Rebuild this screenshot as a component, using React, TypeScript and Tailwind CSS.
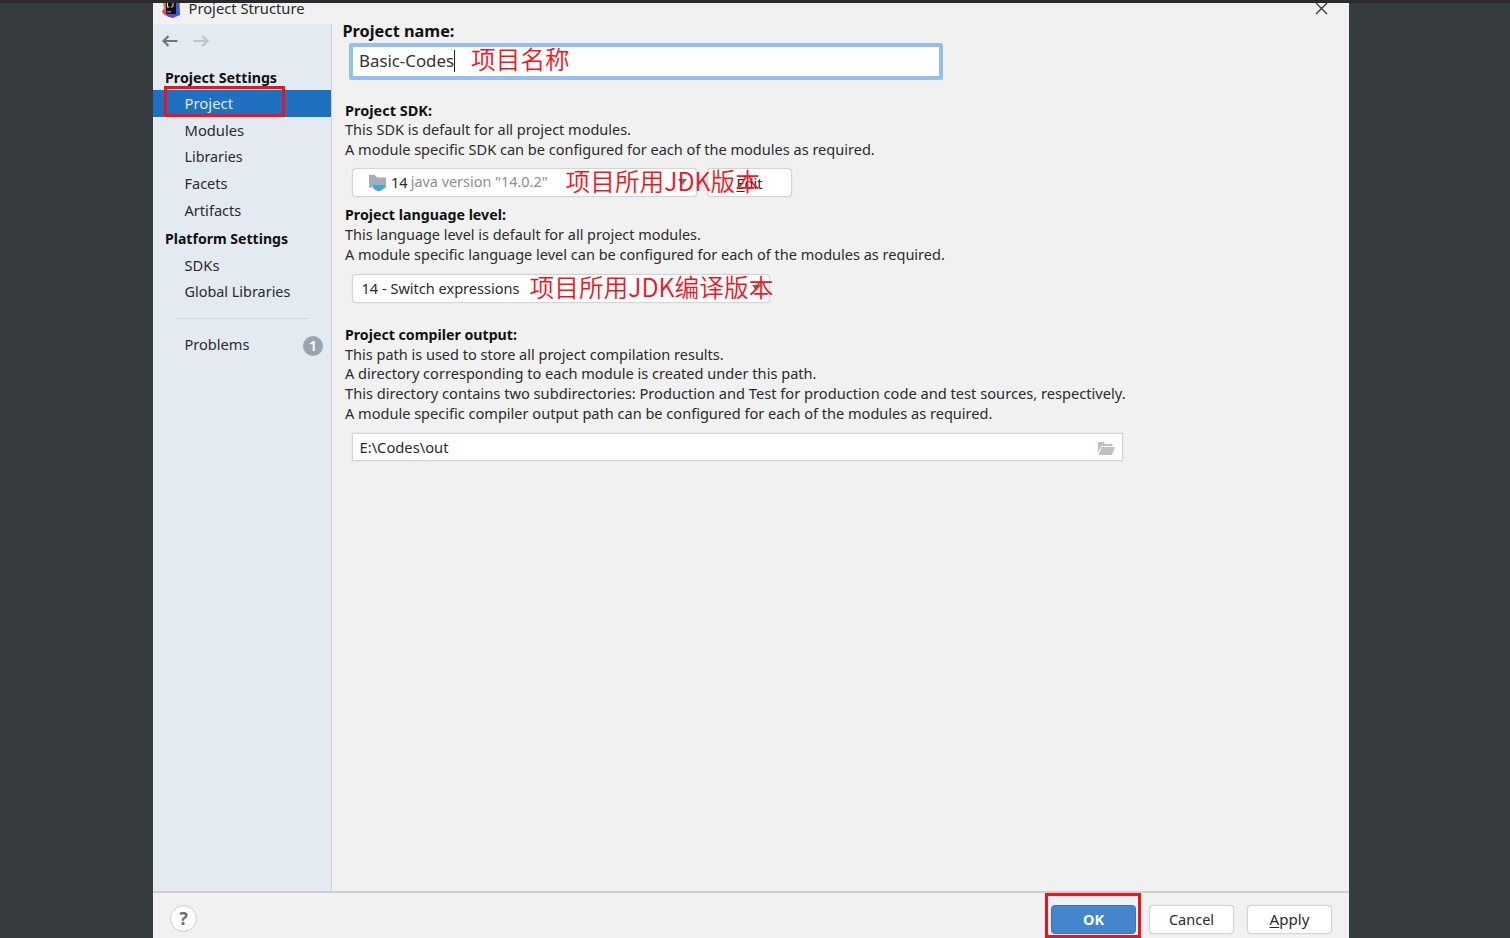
import React from "react";

function Logo() {
  return (
    <svg className="h-[15px] w-[18px] shrink-0" viewBox="0 0 18 15">
      <path d="M1 0H10L8 13L3 12L0 9L2 5Z" fill="#f0643c" />
      <path d="M0 8L4 7L8 14L3 12Z" fill="#e0407a" />
      <path d="M10 0H17.5L18 12L11 15L5 13L4 9Z" fill="#3b5bdc" />
      <path d="M5 10L14 11L11 15L5 13Z" fill="#7b3fc4" />
      <rect x="4" y="0" width="10" height="11" fill="#120c14" />
      <path d="M5.5 0V4M5 4H7.5M11 0V3Q11 4.2 9 4.2" stroke="#e8e8e8" strokeWidth="1" fill="none" />
      <rect x="5.2" y="8.3" width="4" height="1" fill="#b8b8b8" />
    </svg>
  );
}

function Arrow({ className, flip }: { className: string; flip?: boolean }) {
  return (
    <svg className={className} viewBox="0 0 16 12" fill="none" stroke="currentColor" strokeWidth="2.2">
      {flip ? <path d="M0.5 6H14.5M9.5 1L14.5 6L9.5 11" /> : <path d="M15.5 6H1.5M6.5 1L1.5 6L6.5 11" />}
    </svg>
  );
}

function Caret() {
  return (
    <svg className="h-[6px] w-[9px]" viewBox="0 0 9 6">
      <path d="M0 0H9L4.5 6Z" fill="#6e6e6e" />
    </svg>
  );
}

function Item({ children, size }: { children: React.ReactNode; size: string }) {
  return <div className={`flex h-[27px] items-center pb-px pl-[31.5px] ${size}`}>{children}</div>;
}

const note = "absolute whitespace-nowrap font-['Noto_Sans_CJK_SC',sans-serif] font-[350] text-[24.7px] leading-[30px] text-[#f5141e]";
const field = "flex items-center border-[1.5px] shadow-[0_0_1px_#c8c8c8] border-[#d4d4d4] bg-white";

function Sidebar() {
  return (
    <nav className="w-[179px] shrink-0 border-r border-[#d0d4d8] bg-[#e3eaf1] text-[#2b2b2b]">
      <div className="flex h-[42px] items-center gap-[15px] pl-[9px] pb-[8px]">
        <Arrow className="h-[12px] w-[16px] text-[#737679]" />
        <Arrow flip className="h-[12px] w-[16px] text-[#bfc2c5]" />
      </div>
      <div className="flex h-[24px] items-center pl-[12px] text-[14.22px] font-bold text-[#111]">Project Settings</div>
      <div className="relative bg-[#1f70c1] text-[#dfeaf6]">
        <Item size="text-[14.9px]">Project</Item>
        <div className="absolute -top-[4px] left-[11px] h-[31px] w-[121px] border-[3px] border-[#ee141e]" />
      </div>
      <Item size="text-[14.75px]">Modules</Item>
      <Item size="text-[14.3px]">Libraries</Item>
      <Item size="text-[14.5px]">Facets</Item>
      <Item size="text-[14.6px]">Artifacts</Item>
      <div className="flex h-[27px] items-center pl-[12px] text-[14.07px] font-bold text-[#111]">Platform Settings</div>
      <Item size="text-[14.7px]">SDKs</Item>
      <Item size="text-[14.42px]">Global Libraries</Item>
      <div className="mx-[22px] mt-[12px] h-px bg-[#d3dae0]" />
      <div className="mt-[13px] flex items-center justify-between pr-[8px]">
        <Item size="text-[14.59px]">Problems</Item>
        <span className="flex size-[20px] items-center justify-center rounded-full bg-[#9aa3b0] text-[15px] font-semibold text-white">1</span>
      </div>
    </nav>
  );
}

function Content() {
  return (
    <main className="flex-1 pl-[13px] text-[14.55px] leading-[20px] text-[#2b2b2b]">
      <div className="-ml-[2.5px] mt-[-3px] h-[20px] text-[16.28px] font-bold text-[#111]">Project name:</div>
      <div className="relative ml-[4px] mt-[2px] flex h-[37px] w-[594px] items-center rounded-[2px] border-[4px] border-[#97bfec] bg-white pl-[6px] pb-[2px] text-[16.83px] text-[#333]">
        Basic-Codes
        <span className="h-[22px] w-px bg-[#222]" />
        <span className={`${note} left-[118px] top-[-4px]`}>项目名称</span>
      </div>

      <div className="mt-[21px] text-[14.49px] font-bold text-[#111]">Project SDK:</div>
      <div className="-mt-px text-[14.49px]">This SDK is default for all project modules.</div>
      <div className="-mt-px">A module specific SDK can be configured for each of the modules as required.</div>
      <div className="relative ml-[7px] mt-[9px] flex h-[29px] gap-[10px]">
        <div className={`${field} w-[345px] rounded-[4px] pb-px pl-[15px] pr-[9px]`}>
          <svg className="mr-[4px] h-[17px] w-[19px]" viewBox="0 0 19 17">
            <path d="M1 1H7L9 3.5H18V13.5H1Z" fill="#a5adb5" />
            <path d="M5 11H16V13Q14.5 17 10.5 17Q6.5 17 5 13Z" fill="#3fa9dc" />
            <path d="M15.5 11.7Q18.5 11.7 17 13.5L14.5 14.5" stroke="#3fa9dc" fill="none" />
          </svg>
          <span className="mr-[3px]">14</span>
          <span className="flex-1 whitespace-nowrap text-[14.43px] text-[#8e8e8e]">java version "14.0.2"</span>
          <Caret />
        </div>
        <div className={`${field} w-[85px] justify-center rounded-[4px]`}>
          <span><u className="decoration-1 underline-offset-2">E</u>dit</span>
        </div>
        <span className={`${note} left-[213.5px] top-[-3px]`}>项目所用<span className="text-[25px]">JDK</span>版本</span>
      </div>

      <div className="mt-[8px] text-[14.23px] font-bold text-[#111]">Project language level:</div>
      <div className="text-[14.44px]">This language level is default for all project modules.</div>
      <div className="-mt-px text-[14.52px]">A module specific language level can be configured for each of the modules as required.</div>
      <div className={`${field} relative ml-[7px] mt-[10px] h-[29px] w-[418px] rounded-[4px] pb-px pl-[8.5px] pr-[8px]`}>
        <span className="flex-1">14 - Switch expressions</span>
        <Caret />
        <span className={`${note} left-[176.5px] top-[-4px]`}>项目所用<span className="text-[25px]">JDK</span>编译版本</span>
      </div>

      <div className="mt-[22px] text-[14.18px] font-bold text-[#111]">Project compiler output:</div>
      <div className="-mt-px text-[14.51px]">This path is used to store all project compilation results.</div>
      <div className="-mt-px text-[14.59px]">A directory corresponding to each module is created under this path.</div>
      <div className="text-[14.65px]">This directory contains two subdirectories: Production and Test for production code and test sources, respectively.</div>
      <div>A module specific compiler output path can be configured for each of the modules as required.</div>
      <div className={`${field} ml-[7px] mt-[10px] h-[28px] w-[771px] justify-between pl-[6.5px] pr-[7px] text-[14.72px]`}>
        <span className="pb-px">E:\Codes\out</span>
        <svg className="mt-[2px] h-[13px] w-[17px]" viewBox="0 0 17 13">
          <path d="M0 0H5.5L7 2H14.5V4H3.5L0 11Z" fill="#bcc1c4" />
          <path d="M3.8 5H17L14 13H0.5Z" fill="#bcc1c4" />
        </svg>
      </div>
    </main>
  );
}

const button = "flex h-[29px] items-center justify-center rounded-[4px] border-[1.5px] shadow-[0_0_1px_#c8c8c8]";

export default function App() {
  return (
    <div className="flex h-[938px] w-[1510px] flex-col overflow-hidden bg-[#363b3e] font-['Noto_Sans',sans-serif]">
      <div className="h-[3px] shrink-0 bg-[#2a2a2e]" />
      <div className="ml-[153px] flex h-[935px] w-[1196px] flex-col bg-[#f1f1f1]">
        <header className="flex h-[21px] shrink-0 items-start pl-[9px]">
          <Logo />
          <span className="ml-[8.5px] flex-1 text-[14.72px] leading-[11px] text-[#2b2b2b]">Project Structure</span>
          <svg className="mr-[21px] h-[12px] w-[13px]" viewBox="0 0 13 12" stroke="#333" strokeWidth="1.3">
            <path d="M1 0L12 11M12 0L1 11" />
          </svg>
        </header>
        <div className="flex min-h-0 flex-1">
          <Sidebar />
          <Content />
        </div>
        <footer className="flex h-[47px] shrink-0 items-start border-t-2 border-[#cfcfcf] pl-[17px] pt-[12px] text-[14.5px] text-[#2b2b2b]">
          <div className="flex size-[27px] items-center justify-center rounded-full border-[1.5px] border-[#cdcdcd] bg-white text-[18px] font-bold text-[#6e6e6e]">?</div>
          <div className="relative ml-[854px] flex gap-[13px]">
            <div className={`${button} w-[85px] border-[#3b76b8] bg-[#4485cb] font-bold text-white`}>OK</div>
            <div className={`${button} w-[85px] border-[#d4d4d4] bg-white`}>Cancel</div>
            <div className={`${button} w-[85px] border-[#d4d4d4] bg-white text-[15.1px]`}>
              <span><u className="decoration-1 underline-offset-2">A</u>pply</span>
            </div>
            <div className="absolute -left-[6px] -top-[12px] h-[45px] w-[96px] border-[3px] border-[#ee141e]" />
          </div>
        </footer>
      </div>
    </div>
  );
}
